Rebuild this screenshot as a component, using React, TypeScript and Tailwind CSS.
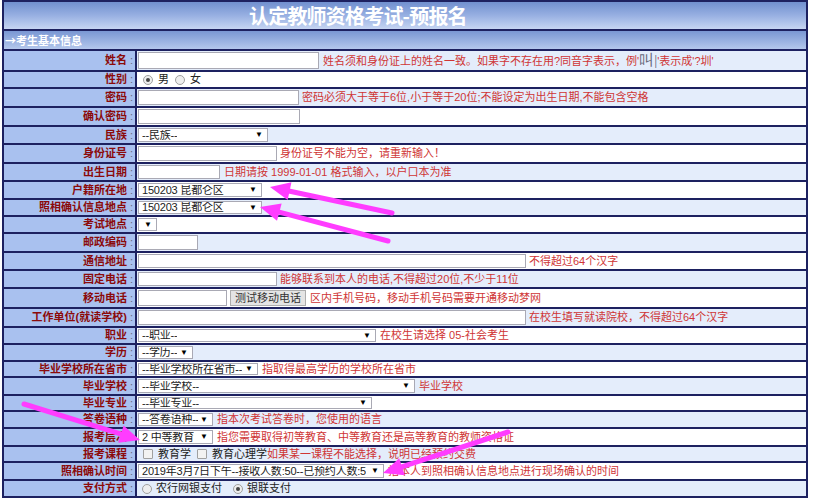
import React from "react";

const LIGHT = "bg-[#e4edfb]";
const WHITE = "bg-white";

function Input({ w }: { w: string }) {
  return <div className={`${w} h-[calc(100%-2px)] border border-[#a9a9b4] bg-white shrink-0`} />;
}

function Select({ w, text }: { w: string; text: string }) {
  return (
    <div className={`${w} h-[calc(100%-2px)] border border-[#a9a9b4] bg-white shrink-0 flex items-center justify-between pl-[3px] pr-[4px] text-[#222]`}>
      <span className="whitespace-nowrap overflow-hidden min-w-0 tracking-[-0.2px]">{text}</span>
      <span className="text-[8px] text-black ml-[2px] shrink-0">▼</span>
    </div>
  );
}

function Hint({ children, ml = "ml-[4px]" }: { children: React.ReactNode; ml?: string }) {
  return <span className={`${ml} text-[#cf3535] whitespace-nowrap`}>{children}</span>;
}

function Radio({ on }: { on?: boolean }) {
  return (
    <span className="inline-flex w-[10px] h-[10px] rounded-full border border-[#a0a0a0] bg-[#eeeeee] items-center justify-center shrink-0">
      {on && <span className="w-[4px] h-[4px] rounded-full bg-[#444]" />}
    </span>
  );
}

function Check() {
  return <span className="inline-block w-[10px] h-[10px] border border-[#a0a0a0] bg-[#f2f2f2] rounded-[1px] shrink-0" />;
}

type Row = { label: string; h: string; content: React.ReactNode };

const rows: Row[] = [
  {
    label: "姓名",
    h: "h-[21px]",
    content: (
      <>
        <Input w="w-[181px]" />
        <Hint>
          姓名须和身份证上的姓名一致。如果字不存在用?同音字表示，例'
          <span className="text-[15px] text-[#667] [font-family:'Liberation_Serif',serif]">叫|</span>'表示成'?圳'
        </Hint>
      </>
    ),
  },
  {
    label: "性别",
    h: "h-[17px]",
    content: (
      <div className="flex items-center pl-[5px]">
        <Radio on />
        <span className="ml-[5px]">男</span>
        <span className="ml-[6px] flex"><Radio /></span>
        <span className="ml-[5px]">女</span>
      </div>
    ),
  },
  {
    label: "密码",
    h: "h-[19px]",
    content: (
      <>
        <Input w="w-[161px]" />
        <Hint ml="ml-[3px]">密码必须大于等于6位,小于等于20位;不能设定为出生日期,不能包含空格</Hint>
      </>
    ),
  },
  { label: "确认密码", h: "h-[19px]", content: <Input w="w-[162px]" /> },
  { label: "民族", h: "h-[18px]", content: <Select w="w-[130px]" text="--民族--" /> },
  {
    label: "身份证号",
    h: "h-[19px]",
    content: (
      <>
        <Input w="w-[139px]" />
        <Hint ml="ml-[3px]">身份证号不能为空，请重新输入！</Hint>
      </>
    ),
  },
  {
    label: "出生日期",
    h: "h-[18px]",
    content: (
      <>
        <Input w="w-[82px]" />
        <Hint>日期请按 1999-01-01 格式输入，以户口本为准</Hint>
      </>
    ),
  },
  { label: "户籍所在地", h: "h-[18px]", content: <Select w="w-[124px]" text="150203 昆都仑区" /> },
  { label: "照相确认信息地点", h: "h-[17px]", content: <Select w="w-[124px]" text="150203 昆都仑区" /> },
  { label: "考试地点", h: "h-[17px]", content: <Select w="w-[19px]" text="" /> },
  { label: "邮政编码", h: "h-[19px]", content: <Input w="w-[60px]" /> },
  {
    label: "通信地址",
    h: "h-[18px]",
    content: (
      <>
        <Input w="w-[388px]" />
        <Hint ml="ml-[3px]">不得超过64个汉字</Hint>
      </>
    ),
  },
  {
    label: "固定电话",
    h: "h-[18px]",
    content: (
      <>
        <Input w="w-[139px]" />
        <Hint ml="ml-[3px]">能够联系到本人的电话,不得超过20位,不少于11位</Hint>
      </>
    ),
  },
  {
    label: "移动电话",
    h: "h-[20px]",
    content: (
      <>
        <Input w="w-[89px]" />
        <div className="ml-[3px] w-[76px] h-[calc(100%-2px)] border border-[#adadad] bg-[#e4e4e4] flex items-center justify-center text-[#333] shrink-0">
          测试移动电话
        </div>
        <Hint>区内手机号码，移动手机号码需要开通移动梦网</Hint>
      </>
    ),
  },
  {
    label: "工作单位(就读学校)",
    h: "h-[19px]",
    content: (
      <>
        <Input w="w-[388px]" />
        <Hint ml="ml-[3px]">在校生填写就读院校，不得超过64个汉字</Hint>
      </>
    ),
  },
  {
    label: "职业",
    h: "h-[17px]",
    content: (
      <>
        <Select w="w-[238px]" text="--职业--" />
        <Hint>在校生请选择 05-社会考生</Hint>
      </>
    ),
  },
  { label: "学历", h: "h-[17px]", content: <Select w="w-[55px]" text="--学历--" /> },
  {
    label: "毕业学校所在省市",
    h: "h-[16px]",
    content: (
      <>
        <Select w="w-[120px]" text="--毕业学校所在省市--" />
        <Hint>指取得最高学历的学校所在省市</Hint>
      </>
    ),
  },
  {
    label: "毕业学校",
    h: "h-[18px]",
    content: (
      <>
        <Select w="w-[277px]" text="--毕业学校--" />
        <Hint>毕业学校</Hint>
      </>
    ),
  },
  { label: "毕业专业", h: "h-[16px]", content: <Select w="w-[234px]" text="--毕业专业--" /> },
  {
    label: "答卷语种",
    h: "h-[17px]",
    content: (
      <>
        <Select w="w-[75px]" text="--答卷语种--" />
        <Hint>指本次考试答卷时，您使用的语言</Hint>
      </>
    ),
  },
  {
    label: "报考层次",
    h: "h-[18px]",
    content: (
      <>
        <Select w="w-[75px]" text="2 中等教育" />
        <Hint>指您需要取得初等教育、中等教育还是高等教育的教师资格证</Hint>
      </>
    ),
  },
  {
    label: "报考课程",
    h: "h-[16px]",
    content: (
      <div className="flex items-center pl-[5px] whitespace-nowrap">
        <Check />
        <span className="ml-[5px]">教育学</span>
        <span className="ml-[6px] flex"><Check /></span>
        <span className="ml-[5px]">教育心理学</span>
        <Hint ml="ml-0">如果某一课程不能选择，说明已经预约交费</Hint>
      </div>
    ),
  },
  {
    label: "照相确认时间",
    h: "h-[18px]",
    content: (
      <>
        <Select w="w-[246px]" text="2019年3月7日下午--接收人数:50--已预约人数:5" />
        <Hint>指本人到照相确认信息地点进行现场确认的时间</Hint>
      </>
    ),
  },
  {
    label: "支付方式",
    h: "h-[17px]",
    content: (
      <div className="flex items-center pl-[4px] whitespace-nowrap">
        <Radio />
        <span className="ml-[4px]">农行网银支付</span>
        <span className="ml-[11px] flex"><Radio on /></span>
        <span className="ml-[4px]">银联支付</span>
      </div>
    ),
  },
];

function Arrow({ x1, y1, x2, y2 }: { x1: number; y1: number; x2: number; y2: number }) {
  const dx = x2 - x1;
  const dy = y2 - y1;
  const len = Math.hypot(dx, dy);
  const ux = dx / len;
  const uy = dy / len;
  const hl = 20;
  const hw = 9;
  const bx = x2 - ux * hl;
  const by = y2 - uy * hl;
  const px = -uy;
  const py = ux;
  return (
    <g>
      <line x1={x1} y1={y1} x2={bx + ux * 2} y2={by + uy * 2} stroke="#ff3cff" strokeWidth={5} strokeLinecap="round" />
      <polygon
        points={`${x2},${y2} ${bx + px * hw},${by + py * hw} ${bx - px * hw},${by - py * hw}`}
        fill="#ff3cff"
      />
    </g>
  );
}

export default function App() {
  return (
    <div className="relative w-[813px] h-[500px] overflow-hidden bg-white text-[11px] leading-none [font-family:'Liberation_Sans','Noto_Sans_CJK_SC',sans-serif]">
      <div className="ml-[2px] w-[806px] border-x-2 border-t-2 border-[#1d2160]">
        <div className="h-[29px] border-b-2 border-[#1d2160] bg-gradient-to-b from-[#7190cf] via-[#98b0e2] to-[#c6d5f2] flex items-center pl-[245px]">
          <span className="text-white font-bold text-[20px] tracking-[-0.8px] [font-family:'Noto_Sans_CJK_SC',sans-serif]">
            认定教师资格考试-预报名
          </span>
        </div>
        <div className="h-[20px] border-b-2 border-[#1d2160] bg-gradient-to-b from-[#7a97d3] to-[#b4c7ec] flex items-center pl-[1px]">
          <span className="text-white font-bold [font-family:'Noto_Sans_CJK_SC',sans-serif]">→考生基本信息</span>
        </div>
        {rows.map((r, i) => (
          <div key={r.label} className={`${r.h} flex border-b-2 border-[#1d2160]`}>
            <div className="w-[133px] shrink-0 border-r-2 border-[#1d2160] bg-[#a9c1ef] flex items-center justify-end pr-[2px] whitespace-nowrap">
              <span className="text-[#8b0a0a] font-bold">{r.label}</span>
              <span className="text-[#6a6a80] ml-[3px]">:</span>
            </div>
            <div className={`flex-1 flex items-center pl-[1px] overflow-hidden whitespace-nowrap text-[#222] ${i % 2 === 0 ? LIGHT : WHITE}`}>
              {r.content}
            </div>
          </div>
        ))}
      </div>
      <svg className="absolute inset-0 pointer-events-none" width={813} height={500}>
        <Arrow x1={392} y1={213} x2={270} y2={187} />
        <Arrow x1={388} y1={241} x2={260} y2={207} />
        <Arrow x1={24} y1={404} x2={140} y2={440} />
        <Arrow x1={508} y1={432} x2={383} y2={473} />
      </svg>
    </div>
  );
}
